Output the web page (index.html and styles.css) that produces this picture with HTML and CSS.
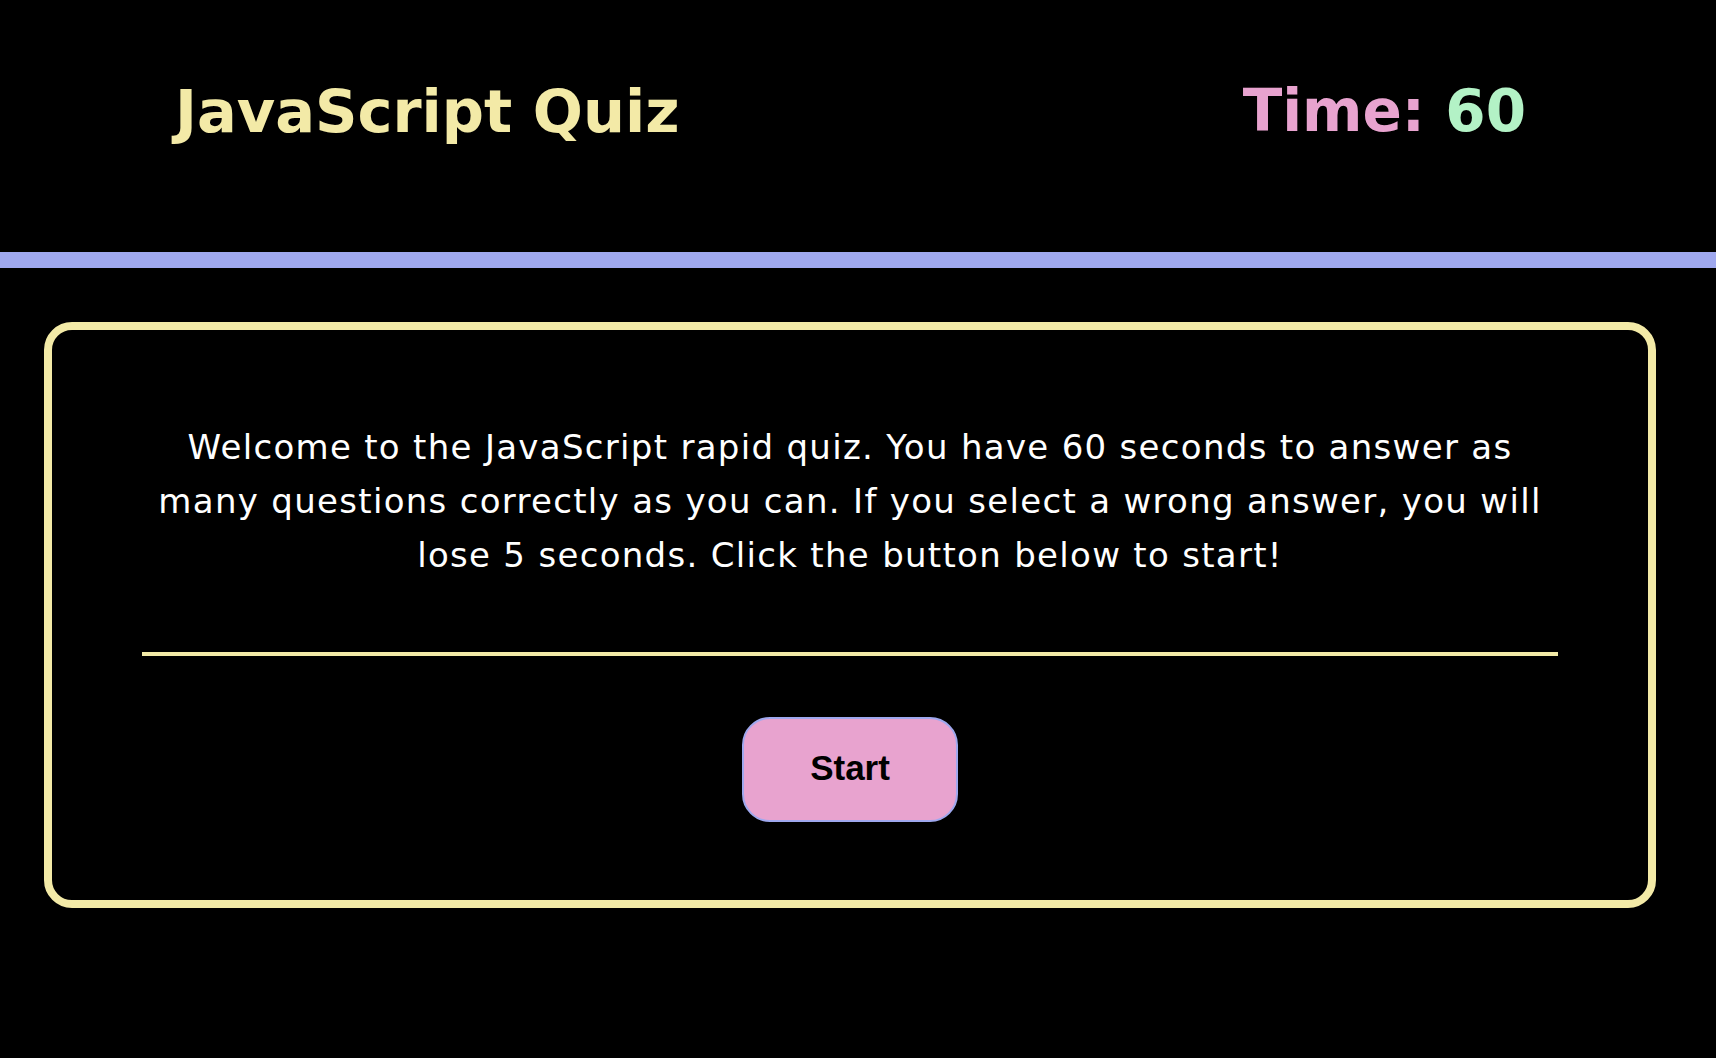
FILE: index.html
```html
<!DOCTYPE html>
<html lang="en">
<head>
<meta charset="utf-8">
<title>JavaScript Quiz</title>
<link rel="stylesheet" href="styles.css">
</head>
<body>
  <header class="header">
    <h1 class="title">JavaScript Quiz</h1>
    <div class="timer"><span class="timer-label">Time:</span> <span class="timer-value">60</span></div>
  </header>
  <main class="card">
    <p class="intro">Welcome to the JavaScript rapid quiz. You have 60 seconds to answer as many questions correctly as you can. If you select a wrong answer, you will lose 5 seconds. Click the button below to start!</p>
    <hr class="divider">
    <div class="actions">
      <button class="start-btn" type="button">Start</button>
    </div>
  </main>
</body>
</html>
```

FILE: styles.css
```css
html, body {
  margin: 0;
  padding: 0;
  background: #000;
}

body {
  font-family: "DejaVu Sans", Verdana, sans-serif;
  color: #fff;
  min-height: 1058px;
}

.header {
  box-sizing: border-box;
  height: 268px;
  padding: 77px 190px 0 175px;
  display: flex;
  justify-content: space-between;
  align-items: flex-start;
  border-bottom: 16px solid #9fa8ee;
}

.title {
  margin: 0;
  font-size: 59px;
  line-height: 69px;
  font-weight: bold;
  color: #f3eaa7;
}

.timer {
  font-size: 58px;
  line-height: 69px;
  font-weight: bold;
}

.timer-label {
  color: #e8a3cf;
}

.timer-value {
  color: #b3f2c6;
}

.card {
  box-sizing: border-box;
  width: 1612px;
  margin: 54px 0 0 44px;
  border: 8px solid #f3eaa7;
  border-radius: 28px;
  padding: 90px 90px 78px;
}

.intro {
  margin: 0;
  padding: 0 10px;
  font-size: 34px;
  line-height: 54px;
  letter-spacing: 1.3px;
  text-align: center;
  color: #fff;
}

.divider {
  margin: 70px 0 0;
  border: 0;
  height: 4px;
  background: #f3eaa7;
}

.actions {
  display: flex;
  justify-content: center;
  margin-top: 61px;
}

.start-btn {
  box-sizing: border-box;
  width: 216px;
  height: 105px;
  border: 2px solid #9fa8ee;
  border-radius: 28px;
  background: #e8a3cf;
  color: #000;
  font-family: "Liberation Sans", Arial, sans-serif;
  font-weight: bold;
  font-size: 35px;
  display: flex;
  align-items: center;
  justify-content: center;
  padding: 0 0 4px;
  cursor: pointer;
}
```
